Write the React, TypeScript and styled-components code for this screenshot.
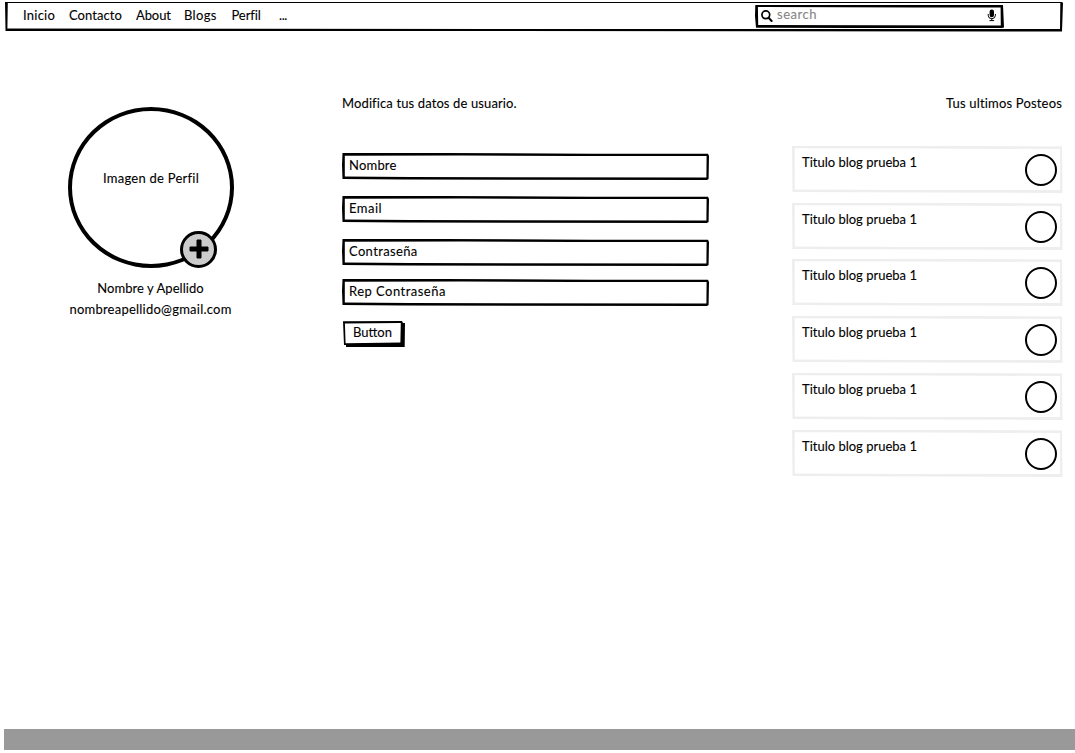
import React from "react";
import styled, { createGlobalStyle } from "styled-components";

const GlobalStyle = createGlobalStyle`
  * { box-sizing: border-box; }
  body {
    margin: 0;
    background: #fff;
    color: #000;
    font-family: Lato, "Liberation Sans", sans-serif;
    font-size: 13px;
    line-height: 18px;
    -webkit-text-stroke: 0.1px currentColor;
  }
`;

const Page = styled.div`
  display: flex;
  flex-direction: column;
  width: 1075px;
  height: 753px;
  padding: 2px 0 3px 4px;
  overflow: hidden;
`;

/* A hand-drawn frame: a filled outline with a slightly skewed white interior. */
const Sketch = styled.div<{ $ink?: string }>`
  position: relative;
  display: flex;
  background: ${(p) => p.$ink ?? "#000"};
  & > * { position: relative; }
  &::before {
    content: "";
    position: absolute;
    inset: 0;
    background: #fff;
  }
`;

const NavBar = styled(Sketch).attrs({ as: "nav" })`
  width: 1058px;
  height: 30px;
  flex: none;
  margin-left: 1px;
  padding: 2px 59px 3px 18px;
  clip-path: polygon(0 0, 1057px 0, 100% 1px, 1057px 29.5px, 400px 29px, 0.5px 29px);
  &::before {
    clip-path: polygon(2.8px 1px, 1055.3px 1px, 1055px 27.1px, 500px 27px, 2.4px 26.6px);
  }
`;

const Links = styled.div`
  display: flex;
  flex: 1;
`;

const Text = styled.span<{ $ls?: number; $w?: number }>`
  display: block;
  flex: none;
  white-space: nowrap;
  letter-spacing: ${(p) => p.$ls ?? 0.3}px;
  width: ${(p) => (p.$w ? p.$w + "px" : "auto")};
`;

const NavLink = styled(Text)`
  padding-top: 2px;
`;

const Search = styled(Sketch)`
  width: 249px;
  height: 24px;
  align-items: center;
  padding: 0 7px 2px 5px;
  color: #868686;
  clip-path: polygon(0.3px 1px, 120px 1px, 248px 1px, 100% 23.5px, 247px 100%, 100px 24px, 1px 23.8px, 0 12px);
  &::before {
    clip-path: polygon(2.9px 3px, 160px 3.6px, 245.6px 3.6px, 245.8px 21.4px, 3.2px 21px);
  }
`;

const SearchText = styled(Text)`
  flex: 1;
  padding: 0 0 2px 4px;
`;

const Main = styled.main`
  display: flex;
  flex: 1;
`;

const Profile = styled.section`
  width: 293px;
  padding-top: 75px;
  display: flex;
  flex-direction: column;
  align-items: center;
`;

const Avatar = styled.div`
  position: relative;
  width: 166px;
  height: 161px;
  margin: 0 0 11px 1px;
  border: 4px solid #000;
  border-radius: 50%;
  display: flex;
  justify-content: center;
  padding-top: 58px;
`;

const AddButton = styled.button`
  position: absolute;
  left: 108px;
  top: 120px;
  width: 37px;
  height: 37px;
  padding: 0 0 1px;
  border: 3px solid #000;
  border-radius: 50%;
  background: #ccc;
  display: flex;
  align-items: center;
  justify-content: center;
`;

const ProfileLine = styled(Text)`
  height: 21px;
`;

const Form = styled.form`
  width: 367px;
  margin-left: 45px;
  padding-top: 62px;
  display: flex;
  flex-direction: column;
  align-items: flex-start;
`;

const Intro = styled(Text)`
  margin-bottom: 41px;
`;

const Field = styled(Sketch)<{ $gap: number }>`
  width: 367px;
  height: 27px;
  margin-bottom: ${(p) => p.$gap}px;
  padding: 3px 7px;
  clip-path: polygon(0.5px 0, 100px 0, 250px 0.8px, 366px 0.8px, 100% 3px, 366.6px 26px, 365px 100%, 60px 26.5px, 0.5px 26px, 0 12px);
  &::before {
    clip-path: polygon(2.8px 2.8px, 120px 2.4px, 230px 3px, 364.6px 3.1px, 364.4px 24.4px, 70px 24px, 2.8px 23.6px);
  }
`;

const Submit = styled(Sketch)`
  width: 62px;
  height: 27px;
  margin-left: 1px;
  padding: 2px 10px;
  clip-path: polygon(0 0.3px, 59px 0, 60px 2px, 100% 2px, 61.7px 26px, 3px 26px, 3px 24px, 1px 24px);
  &::before {
    clip-path: polygon(1.9px 2.4px, 57.8px 1.9px, 57.4px 21.5px, 2.6px 22.2px);
  }
`;

const Posts = styled.section`
  width: 271px;
  margin-left: 83px;
  padding-top: 62px;
  display: flex;
  flex-direction: column;
`;

const PostsTitle = styled(Text)`
  align-self: flex-end;
  margin-bottom: 34px;
  margin-right: 1px;
`;

const Card = styled(Sketch).attrs({ $ink: "#eee" })`
  height: 47px;
  margin-bottom: 10px;
  padding: 7px 6px 0 10px;
  justify-content: space-between;
  clip-path: polygon(0 0, 180px 0, 270px 0.5px, 270.5px 100%, 130px 46.5px, 0.5px 46px);
  &:nth-of-type(2) {
    margin-bottom: 9px;
  }
  &::before {
    clip-path: polygon(2.7px 2.3px, 130px 2.6px, 268.1px 3px, 268px 44.1px, 120px 44.1px, 2.8px 43.6px);
  }
`;

const Dot = styled.div`
  width: 32px;
  height: 32px;
  margin-top: 1px;
  border: 2px solid #000;
  border-radius: 50%;
`;

const Footer = styled.footer`
  height: 21px;
  flex: none;
  background: #999;
`;

const links = [
  { label: "Inicio", width: 46, ls: 0.25 },
  { label: "Contacto", width: 67, ls: 0.05 },
  { label: "About", width: 48, ls: -0.1 },
  { label: "Blogs", width: 47.5, ls: 0.35 },
  { label: "Perfil", width: 47.5, ls: -0.1 },
  { label: "...", width: 12, ls: -0.4 },
];

const fields = [
  { label: "Nombre", gap: 16, ls: 0.2 },
  { label: "Email", gap: 16, ls: 0.5 },
  { label: "Contraseña", gap: 13, ls: 0.35 },
  { label: "Rep Contraseña", gap: 15, ls: 0.47 },
];

const posts = Array.from({ length: 6 }, (_, id) => ({ id, title: "Titulo blog prueba 1" }));

export default function App() {
  return (
    <Page>
      <GlobalStyle />
      <NavBar>
        <Links>
          {links.map((l) => (
            <NavLink key={l.label} $w={l.width} $ls={l.ls}>{l.label}</NavLink>
          ))}
        </Links>
        <Search>
          <svg width="13" height="13" viewBox="0 0 13 13" fill="none" stroke="#000">
            <circle cx="5.8" cy="5.8" r="3.9" strokeWidth="1.7" />
            <path d="M8.6 8.8 L11.6 12" strokeWidth="2" strokeLinecap="round" />
          </svg>
          <SearchText $ls={0.5}>search</SearchText>
          <svg width="10" height="13" viewBox="0 0 10 13" fill="none" stroke="#000">
            <rect x="2.6" y="0.5" width="4.4" height="7.8" rx="2.2" fill="#000" stroke="none" />
            <path d="M1.2 5 V6.2 A3.6 3.5 0 0 0 8.4 6.2 V5 M4.8 9.5 V11.6 M2.5 11.6 H7.1" strokeWidth="1" />
          </svg>
        </Search>
      </NavBar>
      <Main>
        <Profile>
          <Avatar>
            <Text $ls={0.25}>Imagen de Perfil</Text>
            <AddButton type="button" aria-label="+">
              <svg width="20" height="20" viewBox="0 0 20 20">
                <path d="M8 1 H12 V8 H19 V12 H12 V19 H8 V12 H1 V8 H8 Z" fill="#000" stroke="#000" strokeLinejoin="round" />
              </svg>
            </AddButton>
          </Avatar>
          <ProfileLine $ls={0.06}>Nombre y Apellido</ProfileLine>
          <ProfileLine $ls={0.23}>nombreapellido@gmail.com</ProfileLine>
        </Profile>
        <Form>
          <Intro $ls={0.12}>Modifica tus datos de usuario.</Intro>
          {fields.map((f) => (
            <Field key={f.label} $gap={f.gap}>
              <Text $ls={f.ls}>{f.label}</Text>
            </Field>
          ))}
          <Submit>
            <Text $ls={0}>Button</Text>
          </Submit>
        </Form>
        <Posts>
          <PostsTitle $ls={0.18}>Tus ultimos Posteos</PostsTitle>
          {posts.map((p) => (
            <Card key={p.id}>
              <Text $ls={0}>{p.title}</Text>
              <Dot />
            </Card>
          ))}
        </Posts>
      </Main>
      <Footer />
    </Page>
  );
}
